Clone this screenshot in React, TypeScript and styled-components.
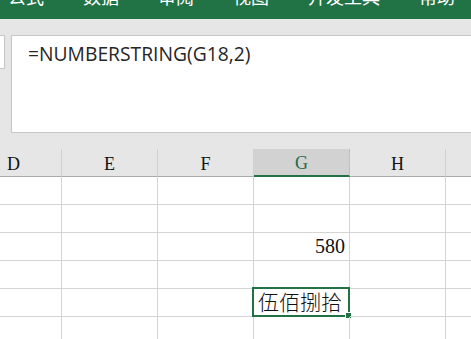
import React from 'react'
import styled, { createGlobalStyle } from 'styled-components'

// ------------------------------------------------ data
const tabs = ['公式', '数据', '审阅', '视图', '开发工具', '帮助']
const columns = ['D', 'E', 'F', 'G', 'H', 'I']
const selectedCol = 'G'

type CellData = { text: string; align?: 'left' | 'right'; cjk?: boolean; selected?: boolean }
const rows: Record<number, Record<string, CellData>> = {
  2: { G: { text: '580', align: 'right' } },
  4: { G: { text: '伍佰捌拾', cjk: true, selected: true } }
}
const rowCount = 6

// ------------------------------------------------ style
const GlobalStyle = createGlobalStyle`
  html, body {
    margin: 0;
    padding: 0;
    width: 471px;
    height: 339px;
    overflow: hidden;
    background: #ffffff;
  }
`
const Page = styled.div`
  display: flex;
  flex-direction: column;
  width: 471px;
  height: 339px;
  overflow: hidden;
`
const Ribbon = styled.div`
  height: 19px;
  background: #217346;
  overflow: hidden;
  flex-shrink: 0;
`
const TabRow = styled.div`
  display: flex;
  gap: 39px;
  padding-left: 8px;
  margin-top: -13px;
`
const Tab = styled.span`
  font-family: 'Noto Sans CJK SC', sans-serif;
  font-size: 18px;
  line-height: 18px;
  color: #ffffff;
  white-space: nowrap;
`
const FormulaArea = styled.div`
  display: flex;
  gap: 6px;
  height: 130px;
  padding: 16px 0;
  box-sizing: border-box;
  background: #e6e6e6;
  flex-shrink: 0;
`
const NameBox = styled.div`
  width: 4px;
  height: 32px;
  background: #ffffff;
  border: 1px solid #c6c6c6;
  border-left: none;
`
const FormulaBox = styled.div`
  flex: 1;
  margin-right: -10px;
  background: #ffffff;
  border: 1px solid #c6c6c6;
  padding: 5px 16px;
  font-family: 'Open Sans', 'Noto Sans', sans-serif;
  font-size: 19.3px;
  line-height: 26px;
  color: #262626;
`
const Grid = styled.div`
  display: grid;
  grid-template-columns: repeat(${columns.length}, 96px);
  grid-auto-rows: 28px;
  margin-left: -34px;
`
const HeaderCell = styled.div<{ $selected: boolean }>`
  display: flex;
  align-items: center;
  justify-content: center;
  box-sizing: border-box;
  background: ${(p) => (p.$selected ? '#d2d2d2' : '#e6e6e6')};
  border-right: 1px solid ${(p) => (p.$selected ? '#c0c0c0' : '#d0d0d0')};
  border-bottom: ${(p) => (p.$selected ? '2px solid #217346' : '1px solid #ababab')};
  font-family: 'Liberation Serif', serif;
  font-size: 18px;
  color: ${(p) => (p.$selected ? '#1c6b4a' : '#111111')};
  padding-top: 3px;
`
const Cell = styled.div<{ $align: string }>`
  position: relative;
  display: flex;
  align-items: flex-end;
  justify-content: ${(p) => (p.$align === 'right' ? 'flex-end' : 'flex-start')};
  box-sizing: border-box;
  border-right: 1px solid #d4d4d4;
  border-bottom: 1px solid #d4d4d4;
  padding: 0 4px 3px 4px;
`
const CellText = styled.span<{ $cjk: boolean }>`
  font-family: ${(p) => (p.$cjk ? "'Noto Sans CJK SC', sans-serif" : "'Liberation Serif', serif")};
  font-size: ${(p) => (p.$cjk ? '21px' : '20px')};
  line-height: ${(p) => (p.$cjk ? '24px' : '22px')};
  font-weight: ${(p) => (p.$cjk ? 300 : 400)};
  color: #111111;
  white-space: nowrap;
`
const Selection = styled.div`
  position: absolute;
  top: -2px;
  left: -2px;
  right: -1px;
  bottom: -1px;
  border: 2px solid #217346;
  pointer-events: none;
`
const Handle = styled.div`
  position: absolute;
  right: -4px;
  bottom: -4px;
  width: 5px;
  height: 5px;
  background: #217346;
  border: 1px solid #ffffff;
`

// ------------------------------------------------ comp
export default function App() {
  return (
    <>
      <GlobalStyle />
      <Page>
        <Ribbon>
          <TabRow>
            {tabs.map((t) => (
              <Tab key={t}>{t}</Tab>
            ))}
          </TabRow>
        </Ribbon>
        <FormulaArea>
          <NameBox />
          <FormulaBox>=NUMBERSTRING(G18,2)</FormulaBox>
        </FormulaArea>
        <Grid>
          {columns.map((c) => (
            <HeaderCell key={c} $selected={c === selectedCol}>
              {c}
            </HeaderCell>
          ))}
          {Array.from({ length: rowCount }).map((_, r) =>
            columns.map((c) => {
              const data = rows[r]?.[c]
              return (
                <Cell key={`${r}-${c}`} $align={data?.align || 'left'}>
                  {data && <CellText $cjk={!!data.cjk}>{data.text}</CellText>}
                  {data?.selected && (
                    <Selection>
                      <Handle />
                    </Selection>
                  )}
                </Cell>
              )
            })
          )}
        </Grid>
      </Page>
    </>
  )
}
